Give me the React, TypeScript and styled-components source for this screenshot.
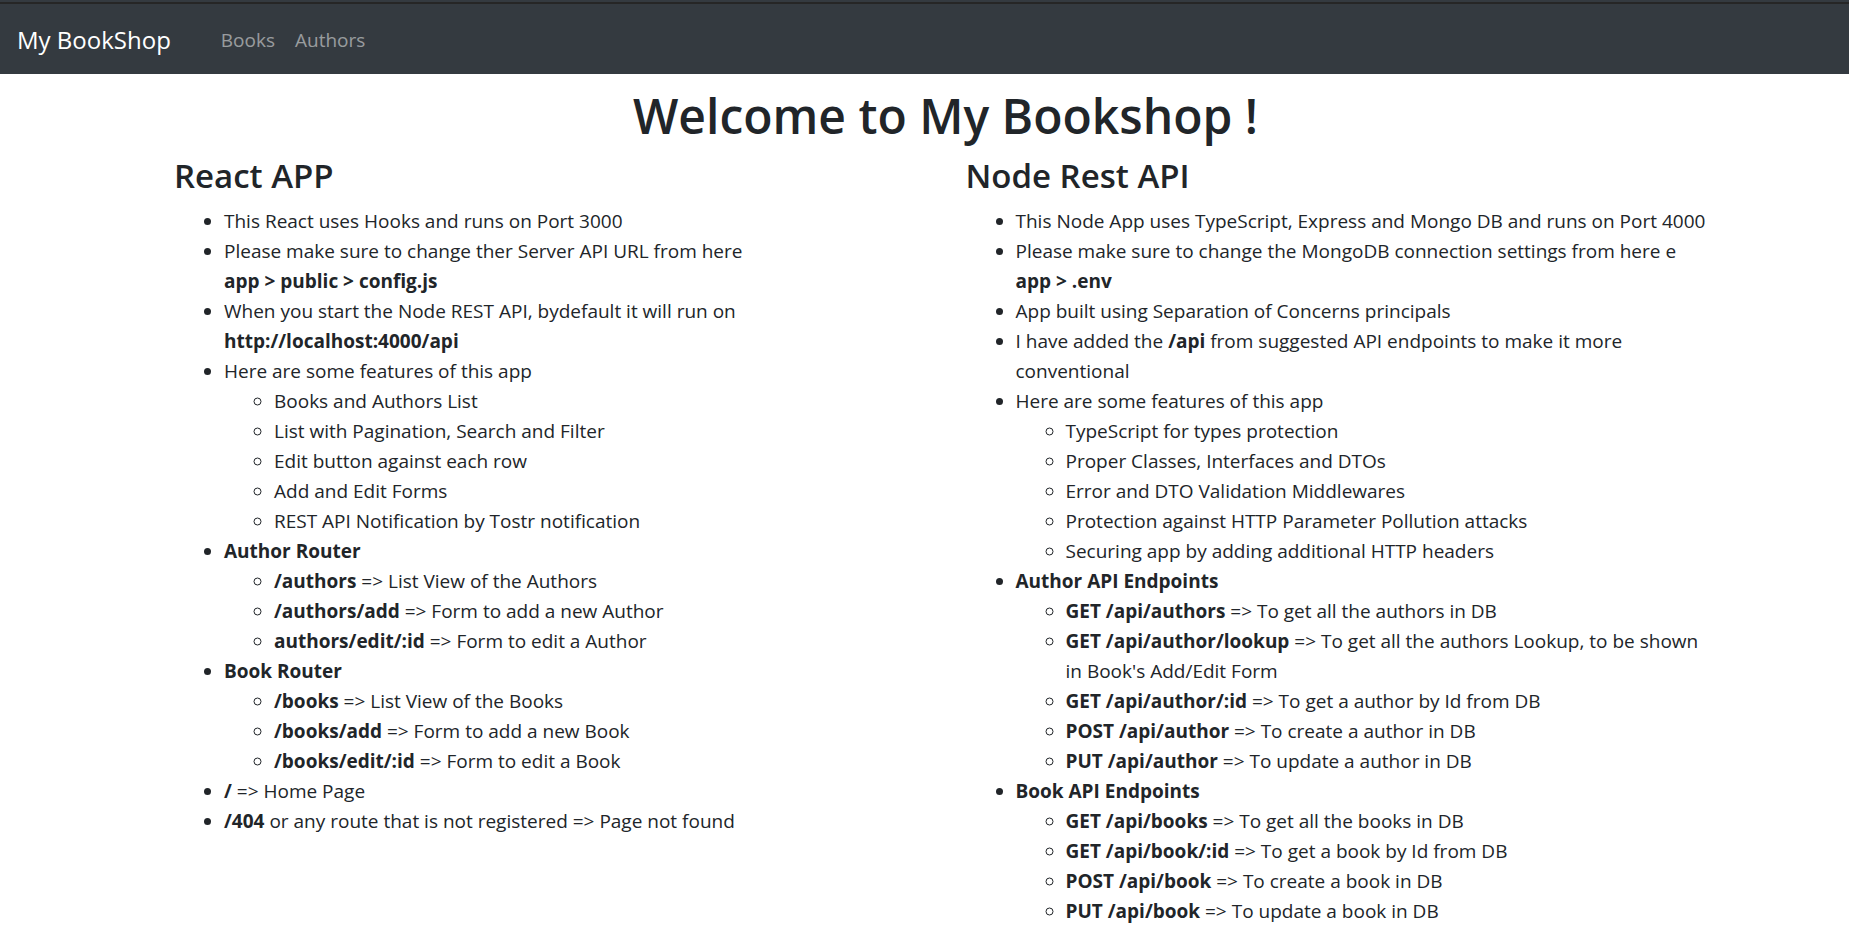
import React from "react";
import styled, { createGlobalStyle } from "styled-components";

const GlobalStyle = createGlobalStyle`
  *, *::before, *::after { box-sizing: border-box; }
  body {
    margin: 0;
    background: #fff;
    color: #212529;
    font-family: "Segoe UI", "Open Sans", "Noto Sans", sans-serif;
    font-size: 19px;
    line-height: 30px;
  }
`;

const Navbar = styled.nav`
  display: flex;
  align-items: center;
  gap: 40px;
  height: 74px;
  padding: 6px 17px 0;
  background: linear-gradient(#343a40 2px, #262626 2px, #262626 4px, #343a40 4px);
`;

const Brand = styled.a`
  color: #fff;
  font-size: 24px;
  line-height: 38px;
  text-decoration: none;
  white-space: nowrap;
`;

const NavList = styled.ul`
  display: flex;
  margin: 0;
  padding: 0;
  list-style: none;
`;

const NavLink = styled.a`
  display: block;
  padding: 0 10px;
  color: rgba(255, 255, 255, 0.5);
  text-decoration: none;
`;

const Page = styled.main`
  padding: 12px 132px 0 174px;
`;

const Title = styled.h1`
  margin: 0 0 10px;
  font-size: 48px;
  font-weight: 600;
  line-height: 60px;
  text-align: center;
`;

const Columns = styled.div`
  display: grid;
  grid-template-columns: 1fr 1fr;
  gap: 40px;
`;

const Heading = styled.h2`
  margin: 0 0 10px;
  font-size: 33px;
  font-weight: 600;
  line-height: 40px;
`;

const List = styled.ul`
  margin: 0 0 20px;
  padding-left: 50px;

  & & {
    margin: 0;
  }
`;

const Strong = styled.strong`
  font-weight: 700;
`;

const Route = ({ path, children }: { path: string; children: React.ReactNode }) => (
  <li>
    <Strong>{path}</Strong> {children}
  </li>
);

export default function App() {
  return (
    <>
      <GlobalStyle />
      <Navbar>
        <Brand href="#/">My BookShop</Brand>
        <NavList>
          <li><NavLink href="#/books">Books</NavLink></li>
          <li><NavLink href="#/authors">Authors</NavLink></li>
        </NavList>
      </Navbar>
      <Page>
        <Title>Welcome to My Bookshop !</Title>
        <Columns>
          <section>
            <Heading>React APP</Heading>
            <List>
              <li>This React uses Hooks and runs on Port 3000</li>
              <li>
                Please make sure to change ther Server API URL from here
                <br />
                <Strong>app &gt; public &gt; config.js</Strong>
              </li>
              <li>
                When you start the Node REST API, bydefault it will run on
                <br />
                <Strong>http://localhost:4000/api</Strong>
              </li>
              <li>
                Here are some features of this app
                <List>
                  <li>Books and Authors List</li>
                  <li>List with Pagination, Search and Filter</li>
                  <li>Edit button against each row</li>
                  <li>Add and Edit Forms</li>
                  <li>REST API Notification by Tostr notification</li>
                </List>
              </li>
              <li>
                <Strong>Author Router</Strong>
                <List>
                  <Route path="/authors">=&gt; List View of the Authors</Route>
                  <Route path="/authors/add">=&gt; Form to add a new Author</Route>
                  <Route path="authors/edit/:id">=&gt; Form to edit a Author</Route>
                </List>
              </li>
              <li>
                <Strong>Book Router</Strong>
                <List>
                  <Route path="/books">=&gt; List View of the Books</Route>
                  <Route path="/books/add">=&gt; Form to add a new Book</Route>
                  <Route path="/books/edit/:id">=&gt; Form to edit a Book</Route>
                </List>
              </li>
              <Route path="/">=&gt; Home Page</Route>
              <Route path="/404">or any route that is not registered =&gt; Page not found</Route>
            </List>
          </section>
          <section>
            <Heading>Node Rest API</Heading>
            <List>
              <li>This Node App uses TypeScript, Express and Mongo DB and runs on Port 4000</li>
              <li>
                Please make sure to change the MongoDB connection settings from here e
                <br />
                <Strong>app &gt; .env</Strong>
              </li>
              <li>App built using Separation of Concerns principals</li>
              <li>
                I have added the <Strong>/api</Strong> from suggested API endpoints to make it more
                conventional
              </li>
              <li>
                Here are some features of this app
                <List>
                  <li>TypeScript for types protection</li>
                  <li>Proper Classes, Interfaces and DTOs</li>
                  <li>Error and DTO Validation Middlewares</li>
                  <li>Protection against HTTP Parameter Pollution attacks</li>
                  <li>Securing app by adding additional HTTP headers</li>
                </List>
              </li>
              <li>
                <Strong>Author API Endpoints</Strong>
                <List>
                  <Route path="GET /api/authors">=&gt; To get all the authors in DB</Route>
                  <Route path="GET /api/author/lookup">
                    =&gt; To get all the authors Lookup, to be shown in Book's Add/Edit Form
                  </Route>
                  <Route path="GET /api/author/:id">=&gt; To get a author by Id from DB</Route>
                  <Route path="POST /api/author">=&gt; To create a author in DB</Route>
                  <Route path="PUT /api/author">=&gt; To update a author in DB</Route>
                </List>
              </li>
              <li>
                <Strong>Book API Endpoints</Strong>
                <List>
                  <Route path="GET /api/books">=&gt; To get all the books in DB</Route>
                  <Route path="GET /api/book/:id">=&gt; To get a book by Id from DB</Route>
                  <Route path="POST /api/book">=&gt; To create a book in DB</Route>
                  <Route path="PUT /api/book">=&gt; To update a book in DB</Route>
                </List>
              </li>
            </List>
          </section>
        </Columns>
      </Page>
    </>
  );
}
